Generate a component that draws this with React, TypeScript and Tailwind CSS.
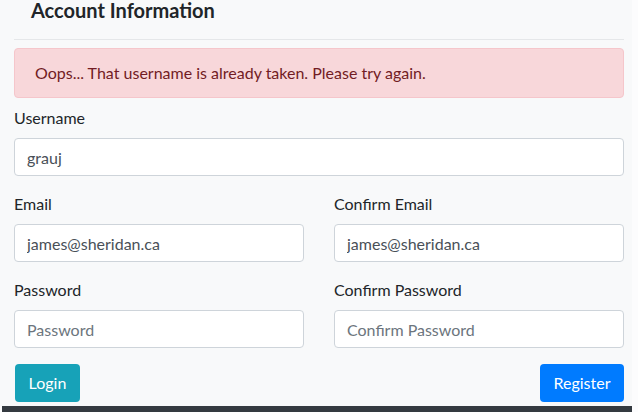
import React from "react";

const font = { fontFamily: "Lato, 'Noto Sans', sans-serif" };

const Field = ({
  label,
  value,
  placeholder,
}: {
  label: string;
  value?: string;
  placeholder?: string;
}) => (
  <div className="mb-[16px]">
    <label className="block h-[24px] leading-[24px] mb-[8px] text-[16px] text-[#212529]">
      {label}
    </label>
    <input
      readOnly
      value={value}
      placeholder={placeholder}
      className="block w-full h-[38px] px-[12px] bg-white border border-[#ced4da] rounded-[4px] text-[16px] text-[#495057] placeholder:text-[#6c757d] outline-none"
      style={font}
    />
  </div>
);

export default function App() {
  return (
    <div className="w-[638px] h-[412px] overflow-hidden bg-[#fcfcfd]" style={font}>
      <div className="w-[632px] h-[406px] bg-[#f8f9fa] pl-[14px] pr-[8px]">
        <h2 className="pl-[17px] h-[20px] leading-[20px] text-[20px] font-bold text-[#212529]">
          Account Information
        </h2>
        <hr className="mt-[19px] border-0 border-t border-[#e5e7e9]" />
        <div className="mt-[8px] h-[50px] flex items-center px-[20px] bg-[#f8d7da] border border-[#f5c6cb] rounded-[4px] text-[16px] text-[#721c24]">
          Oops... That username is already taken. Please try again.
        </div>
        <div className="mt-[8px]">
          <Field label="Username" value="grauj" />
          <div className="grid grid-cols-2 gap-x-[30px]">
            <Field label="Email" value="james@sheridan.ca" />
            <Field label="Confirm Email" value="james@sheridan.ca" />
            <Field label="Password" placeholder="Password" />
            <Field label="Confirm Password" placeholder="Confirm Password" />
          </div>
          <div className="flex justify-between">
            <button className="ml-[1px] w-[65px] h-[38px] rounded-[4px] bg-[#17a2b8] text-white text-[16px]">
              Login
            </button>
            <button className="w-[84px] h-[38px] rounded-[4px] bg-[#007bff] text-white text-[16px]">
              Register
            </button>
          </div>
        </div>
      </div>
      <div className="ml-[2px] w-[630px] h-[6px] bg-[#343a40]" />
    </div>
  );
}
